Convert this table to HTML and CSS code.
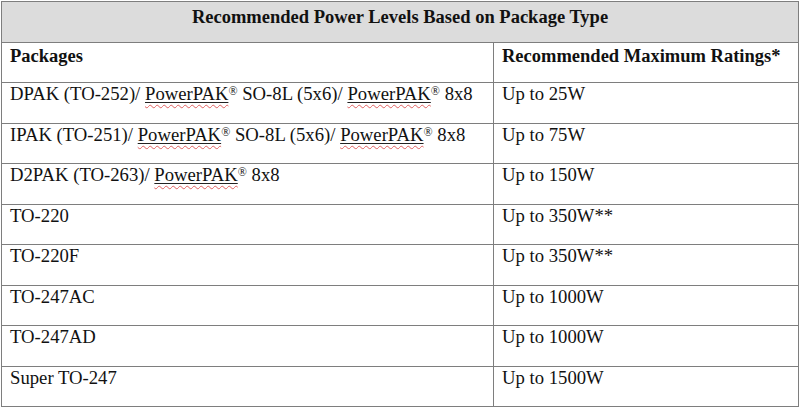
FILE: index.html
```html
<!DOCTYPE html>
<html>
<head>
<meta charset="utf-8">
<link rel="stylesheet" href="styles.css">
</head>
<body>
<table class="power">
  <colgroup><col class="col1"><col class="col2"></colgroup>
  <tr class="title-row"><th colspan="2" class="title">Recommended Power Levels Based on Package Type</th></tr>
  <tr class="head-row"><th class="c1">Packages</th><th class="c2">Recommended Maximum Ratings*</th></tr>
  <tr><td class="c1">DPAK (TO-252)/ <span class="spell"><span class="ul">PowerPAK</span></span><sup>®</sup> SO-8L (5x6)/ <span class="spell"><span class="ul">PowerPAK</span></span><sup>®</sup> 8x8</td><td class="c2">Up to 25W</td></tr>
  <tr><td class="c1">IPAK (TO-251)/ <span class="spell"><span class="ul">PowerPAK</span></span><sup>®</sup> SO-8L (5x6)/ <span class="spell"><span class="ul">PowerPAK</span></span><sup>®</sup> 8x8</td><td class="c2">Up to 75W</td></tr>
  <tr><td class="c1">D2PAK (TO-263)/ <span class="spell"><span class="ul">PowerPAK</span></span><sup>®</sup> 8x8</td><td class="c2">Up to 150W</td></tr>
  <tr><td class="c1">TO-220</td><td class="c2">Up to 350W**</td></tr>
  <tr><td class="c1">TO-220F</td><td class="c2">Up to 350W**</td></tr>
  <tr><td class="c1">TO-247AC</td><td class="c2">Up to 1000W</td></tr>
  <tr><td class="c1">TO-247AD</td><td class="c2">Up to 1000W</td></tr>
  <tr><td class="c1">Super TO-247</td><td class="c2">Up to 1500W</td></tr>
</table>
</body>
</html>
```
FILE: styles.css
```css
html, body {
  margin: 0;
  padding: 0;
  background: #ffffff;
}
body {
  font-family: "Liberation Serif", "Times New Roman", serif;
  color: #111;
}
.power {
  margin: 1px 0 0 1px;
  width: 797px;
  border-collapse: collapse;
  table-layout: fixed;
  border: 1px solid #8c8c8c;
  font-size: 18.7px;
}
.col1 {
  width: 492px;
}
.col2 {
  width: 305px;
}
.power tr {
  height: 40.5px;
}
.power th, .power td {
  border: 1px solid #7e7e7e;
  vertical-align: top;
  text-align: left;
  padding: 1px 8px 0 8px;
  white-space: nowrap;
  line-height: 20px;
  overflow: hidden;
}
.power th {
  font-weight: bold;
  font-size: 18.5px;
  padding-top: 3px;
}
.title-row {
  background: #dcdcdc;
}
.power .title {
  text-align: center;
  padding-top: 5px;
}
.spell {
  text-decoration: underline wavy #e06060;
  text-decoration-thickness: 1px;
  text-underline-offset: 4px;
}
.ul {
  text-decoration: underline #222;
  text-decoration-thickness: 1px;
  text-underline-offset: 2px;
}
sup {
  font-size: 12px;
  line-height: 0;
  vertical-align: 5px;
}
```
